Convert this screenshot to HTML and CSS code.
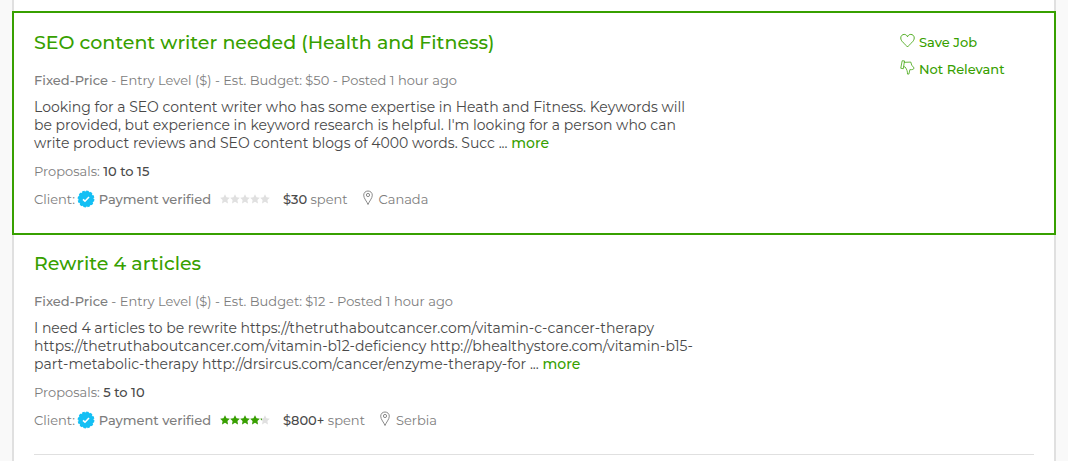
FILE: index.html
```html
<!DOCTYPE html>
<html lang="en">
<head>
    <meta charset="UTF-8">
    <meta name="viewport" content="width=device-width, initial-scale=1.0">
    <title>Job Feed</title>
    <link rel="stylesheet" href="styles.css">
</head>
<body>
    <!-- shared icons -->
    <svg class="sprite" width="0" height="0" aria-hidden="true">
        <symbol id="icon-heart" viewBox="0 0 16 16">
            <path d="M8 14.800 C5.500 11.800 0.800 9 0.800 5.300 C0.800 3 2.500 1.500 4.500 1.500 C6.200 1.500 7.400 2.500 8 4 C8.600 2.500 9.800 1.500 11.500 1.500 C13.500 1.500 15.200 3 15.200 5.300 C15.200 9 10.500 11.800 8 14.800 Z" fill="none" stroke="currentColor" stroke-width="0.900"/>
        </symbol>
        <symbol id="icon-dislike" viewBox="0 0 16 16">
            <path d="M4.800 1 L2.300 0.800 L0.800 8.800 L3.500 9.300 Z M4.500 2.500 L11.500 2.200 L12.500 5.500 L15 8.500 C15 10 13 10.500 10.500 10.300 L9.500 15 L8 15 C8 12 7.500 10.500 5.500 7.500 L4 7" fill="none" stroke="currentColor" stroke-width="0.800"/>
        </symbol>
        <symbol id="icon-verified" viewBox="0 0 18 18">
            <circle cx="9" cy="9" r="7.700" fill="#14bff4" stroke="#14bff4" stroke-width="1.400" stroke-dasharray="2.500 1.530"/>
            <path d="M6 9.300 L8 11.200 L12 7" fill="none" stroke="#fff" stroke-width="1.600"/>
        </symbol>
        <symbol id="icon-pin" viewBox="0 0 10 16">
            <path d="M5 14.500 C4 11.500 0.700 8.500 0.700 5.200 C0.700 2.700 2.600 1 5 1 C7.400 1 9.300 2.700 9.300 5.200 C9.300 8.500 6 11.500 5 14.500 Z" fill="none" stroke="currentColor" stroke-width="0.900"/>
            <circle cx="5" cy="5" r="1.600" fill="none" stroke="currentColor" stroke-width="0.900"/>
        </symbol>
        <symbol id="icon-stars" viewBox="0 0 50 10">
            <path id="star" d="M5 0.300 L6.500 3.300 L9.800 3.700 L7.400 6 L8 9.400 L5 7.800 L2 9.400 L2.600 6 L0.200 3.700 L3.500 3.300 Z"/>
            <use href="#star" x="10"/>
            <use href="#star" x="20"/>
            <use href="#star" x="30"/>
            <use href="#star" x="40"/>
        </symbol>
    </svg>

    <main class="feed">
        <article class="job job-active">
            <div class="job-body">
                <h2><a href="#">SEO content writer needed (Health and Fitness)</a></h2>
                <p class="meta"><strong>Fixed-Price</strong> - Entry Level ($) - Est. Budget: $50 - Posted 1 hour ago</p>
                <p class="description">Looking for a SEO content writer who has some expertise in Heath and Fitness. Keywords will<br>
                    be provided, but experience in keyword research is helpful. I'm looking for a person who can<br>
                    write product reviews and SEO content blogs of 4000 words. Succ ... <a href="#">more</a></p>
                <p class="proposals">Proposals: <strong>10 to 15</strong></p>
                <div class="client">
                    <span class="payment">Client: <svg class="verified"><use href="#icon-verified"/></svg> <strong>Payment verified</strong></span>
                    <span class="rating">
                        <svg class="stars"><use href="#icon-stars"/></svg>
                    </span>
                    <span class="spent"><strong>$30</strong> spent</span>
                    <span class="location"><svg class="pin"><use href="#icon-pin"/></svg>Canada</span>
                </div>
            </div>
            <div class="actions">
                <button type="button"><svg><use href="#icon-heart"/></svg>Save Job</button>
                <button type="button"><svg><use href="#icon-dislike"/></svg>Not Relevant</button>
            </div>
        </article>

        <article class="job">
            <div class="job-body">
                <h2><a href="#">Rewrite 4 articles</a></h2>
                <p class="meta"><strong>Fixed-Price</strong> - Entry Level ($) - Est. Budget: $12 - Posted 1 hour ago</p>
                <p class="description">I need 4 articles to be rewrite https://thetruthaboutcancer.com/vitamin-c-cancer-therapy<br>
                    https://thetruthaboutcancer.com/vitamin-b12-deficiency http://bhealthystore.com/vitamin-b15-<br>
                    part-metabolic-therapy http://drsircus.com/cancer/enzyme-therapy-for ... <a href="#">more</a></p>
                <p class="proposals">Proposals: <strong>5 to 10</strong></p>
                <div class="client">
                    <span class="payment">Client: <svg class="verified"><use href="#icon-verified"/></svg> <strong>Payment verified</strong></span>
                    <span class="rating">
                        <svg class="stars"><use href="#icon-stars"/></svg>
                        <span class="rating-value" style="width: 84%"><svg class="stars"><use href="#icon-stars"/></svg></span>
                    </span>
                    <span class="spent"><strong>$800+</strong> spent</span>
                    <span class="location"><svg class="pin"><use href="#icon-pin"/></svg>Serbia</span>
                </div>
            </div>
        </article>
    </main>
</body>
</html>
```
FILE: styles.css
```css
* { margin: 0; padding: 0; box-sizing: border-box; }
body { font-family: Gotham, Montserrat, Inter, sans-serif; font-size: 13px; line-height: 18px; color: #7d7d7d; background: #f9f9f9; }
a { color: #37a000; text-decoration: none; }
strong { font-weight: 500; }
.sprite { position: absolute; }

.feed { margin: 0 12px; padding-top: 13px; min-height: 100vh; background: #fff; border: solid #e0e0e0; border-width: 0 2px; }

.job { display: flex; justify-content: space-between; margin: 0 20px; padding: 18px 0 25px; border-bottom: 1px solid #e0e0e0; }
.job-active { position: relative; margin: -2px -2px -1px; padding-left: 20px; padding-right: 20px; border: 2px solid #37a000; }
.job-body { white-space: nowrap; }

h2 { font-size: 19px; line-height: 24px; font-weight: 500; margin-bottom: 16px; }
.meta { margin-bottom: 9px; }
.description { font-size: 14px; color: #494949; margin-bottom: 10px; }
.description a { font-weight: 500; }
.proposals { margin-bottom: 10px; }
.proposals strong, .spent strong { color: #494949; }

.client { display: flex; align-items: center; }
.payment { width: 186px; }
.verified { width: 18px; height: 18px; margin-left: -1px; vertical-align: top; }
.rating { position: relative; height: 10px; margin-right: 13px; }
.stars { display: block; width: 50px; height: 10px; fill: #e0e0e0; }
.rating-value { position: absolute; top: 0; left: 0; overflow: hidden; }
.rating-value .stars { fill: #37a000; }
.location { display: flex; margin-left: 15px; }
.pin { width: 10px; height: 16px; margin-right: 6px; }

.actions { display: flex; flex-direction: column; align-items: flex-start; gap: 9px; width: 134px; padding-top: 2px; }
.actions button { display: flex; gap: 4px; font: inherit; font-weight: 500; color: #37a000; background: none; border: none; cursor: pointer; }
.actions svg { width: 15px; height: 15px; }
```
